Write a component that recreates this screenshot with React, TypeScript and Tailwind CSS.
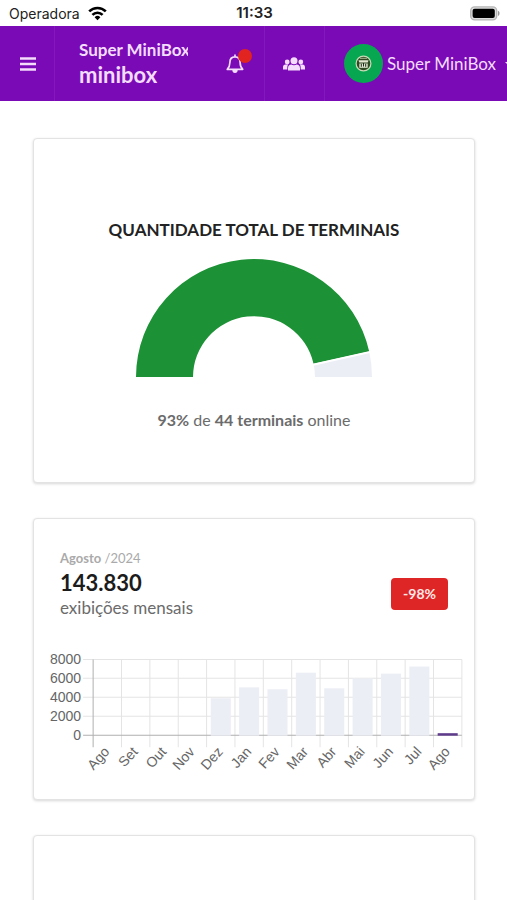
import type { ReactNode } from "react";

const months = [
  { label: "Ago", value: 0 },
  { label: "Set", value: 0 },
  { label: "Out", value: 0 },
  { label: "Nov", value: 0 },
  { label: "Dez", value: 3900 },
  { label: "Jan", value: 5050 },
  { label: "Fev", value: 4850 },
  { label: "Mar", value: 6600 },
  { label: "Abr", value: 4950 },
  { label: "Mai", value: 6000 },
  { label: "Jun", value: 6500 },
  { label: "Jul", value: 7250 },
  { label: "Ago", value: 144 },
];

const StatusBar = () => (
  <div className="grid h-[26px] shrink-0 grid-cols-3 items-center bg-white pl-[9px] pr-[7px] font-['Inter',sans-serif] text-[14px] text-[#222]">
    <div className="flex items-center gap-[8px]">
      <span>Operadora</span>
      <svg width="19" height="15" viewBox="0 0 19 15" aria-hidden="true">
        <g fill="none" stroke="#000" strokeWidth="2.6">
          <path d="M1.2 5.4a11.8 11.8 0 0 1 16.6 0" />
          <path d="M4.4 8.8a7.2 7.2 0 0 1 10.2 0" />
        </g>
        <path d="M9.5 14.2 6.6 11.2a4.1 4.1 0 0 1 5.8 0z" fill="#000" />
      </svg>
    </div>
    <span className="text-center text-[15px] font-semibold">11:33</span>
    <svg
      className="justify-self-end"
      width="30"
      height="15"
      viewBox="0 0 30 15"
      aria-hidden="true"
    >
      <rect x="0.7" y="0.9" width="26" height="13" rx="4" fill="#ddd" stroke="#b5b5b5" strokeWidth="1.4" />
      <rect x="2.6" y="2.8" width="22.2" height="9.2" rx="2" fill="#000" />
      <path d="M28 4.8c2 .8 2 4.4 0 5.2z" fill="#999" />
    </svg>
  </div>
);

const Header = () => (
  <header className="flex h-[75px] shrink-0 items-stretch overflow-hidden bg-[#7a0ab5] text-[#f3dcfc]">
    <button
      type="button"
      aria-label="Menu"
      className="flex w-[55px] shrink-0 items-center justify-center border-r border-[#8418bb] pl-[2px]"
    >
      <svg width="16" height="14" viewBox="0 0 16 14" aria-hidden="true">
        <path d="M0 1.5h16M0 7h16M0 12.5h16" stroke="currentColor" strokeWidth="2.4" />
      </svg>
    </button>

    <div className="flex min-w-0 flex-1 flex-col justify-center pb-[2px] pl-6">
      <span className="w-[109px] overflow-hidden whitespace-nowrap text-[17px] leading-[24px] font-bold">
        Super MiniBox
      </span>
      <strong className="text-[22px] leading-[26px] font-bold">minibox</strong>
    </div>

    <button
      type="button"
      aria-label="Notificações"
      className="relative flex w-[60px] shrink-0 items-center justify-center border-r border-[#8418bb]"
    >
      <svg width="18" height="20" viewBox="0 0 16 18" aria-hidden="true">
        <path
          d="M8 1v1.6M8 2.6c-3 0-4.6 2.2-4.6 5 0 3.2-.8 4.6-2.4 6.2h14c-1.6-1.6-2.4-3-2.4-6.2 0-2.8-1.6-5-4.6-5z"
          fill="none"
          stroke="currentColor"
          strokeWidth="1.5"
          strokeLinejoin="round"
          strokeLinecap="round"
        />
        <path d="M5.6 14.5a2.4 2.7 0 0 0 4.8 0z" fill="currentColor" />
      </svg>
      <span className="absolute top-[23px] left-[33px] size-[14px] rounded-full bg-[#e1241f]" />
    </button>

    <button
      type="button"
      aria-label="Usuários"
      className="flex w-[60px] shrink-0 items-center justify-center border-r border-[#8418bb] pr-[2px]"
    >
      <svg width="22" height="14" viewBox="0 0 22 14" fill="currentColor" aria-hidden="true">
        <circle cx="4.2" cy="5" r="2.4" />
        <circle cx="17.8" cy="5" r="2.4" />
        <path d="M0 12.5V10.2c0-1.7 1-2.6 2.4-2.6h2.9C4.4 8.4 4.3 9.6 4.3 12.5z" />
        <path d="M22 12.5V10.2c0-1.7-1-2.6-2.4-2.6h-2.9c.9.8 1 2 1 4.9z" />
        <circle cx="11" cy="3.8" r="3.5" />
        <path d="M5 13.5v-2.3c0-2.2 1.4-3.6 3.4-3.6.7.4 1.6.7 2.6.7s1.9-.3 2.6-.7c2 0 3.4 1.4 3.4 3.6v2.3z" />
      </svg>
    </button>

    <button
      type="button"
      className="flex w-[182px] shrink-0 items-center gap-1 pl-[19px] text-[17px] whitespace-nowrap"
    >
      <svg className="shrink-0" width="39" height="39" viewBox="0 0 39 39" aria-hidden="true">
        <circle cx="19.5" cy="19.5" r="19.5" fill="#06a750" />
        <circle cx="19.5" cy="19.5" r="7.4" fill="#2f4a22" stroke="#c9dcb8" strokeWidth="1.2" />
        <path d="M14.5 16.2h10l-.8 2.2h-8.4z" fill="#e4e6d2" />
        <path d="M15.3 19.5h8.4v4.3h-8.4z" fill="#dfe6d0" />
        <path d="M17.3 19.8v3M19.5 19v3.5M21.7 19.8v3" stroke="#1f2a18" strokeWidth="1" />
        <path d="M16 14.3h7" stroke="#a9b894" strokeWidth="1" />
      </svg>
      <span>Super MiniBox</span>
      <svg className="ml-[5px] shrink-0" width="8" height="4" viewBox="0 0 8 4" aria-hidden="true">
        <path d="M0 0h8L4 4z" fill="currentColor" />
      </svg>
    </button>
  </header>
);

const Card = ({ className, children }: { className: string; children?: ReactNode }) => (
  <section
    className={`shrink-0 rounded-[4px] border border-[#e3e3e3] bg-white shadow-[0_1px_3px_rgba(0,0,0,0.16)] ${className}`}
  >
    {children}
  </section>
);

const OnlineGauge = () => (
  <svg
    className="mt-[16px] w-[238px]"
    viewBox="0 0 238 119"
    role="img"
    aria-label="93% dos terminais online"
  >
    <path d="M234.2 92.5A118 118 0 0 1 237 118H180A61 61 0 0 0 178.5 104.7Z" fill="#ebeef5" />
    <path d="M1 118A118 118 0 0 1 234.2 92.5L178.5 104.7A61 61 0 0 0 58 118Z" fill="#1c9135" />
    <path d="M178 105.8 235 93.1" stroke="#fff" strokeWidth="2" />
  </svg>
);

const LEFT = 47;
const BASE = 83;
const STEP = 28.3;
const SCALE = 75.6 / 8000;

const ViewsChart = () => (
  <svg
    className="mt-[33px] w-full font-['Liberation_Sans',Arial,sans-serif]"
    viewBox="0 0 417 129"
    role="img"
    aria-label="Exibições por mês"
  >
    <g stroke="#e4e4e4">
      {[2000, 4000, 6000, 8000].map((tick) => (
        <path key={tick} d={`M${LEFT - 10} ${BASE - tick * SCALE}H${LEFT + 13 * STEP}`} />
      ))}
      {Array.from({ length: 13 }, (_, i) => (
        <path key={i} d={`M${LEFT + (i + 1) * STEP} ${BASE - 8000 * SCALE}V${BASE + 12}`} />
      ))}
    </g>
    <path
      d={`M${LEFT} ${BASE - 8000 * SCALE}V${BASE + 12}M${LEFT - 10} ${BASE}H${LEFT + 13 * STEP}`}
      stroke="#b0b0b0"
    />
    <g fill="#666" fontSize="14" textAnchor="end">
      {[0, 2000, 4000, 6000, 8000].map((tick) => (
        <text key={tick} x={LEFT - 12} y={BASE - tick * SCALE + 5}>
          {tick}
        </text>
      ))}
    </g>
    {months.map((month, i) => {
      const center = LEFT + (i + 0.5) * STEP;
      const last = i === months.length - 1;
      const height = last ? 2 : month.value * SCALE;
      return (
        <g key={i}>
          {month.value > 0 && (
            <rect
              x={center - 10}
              y={BASE - height}
              width="20"
              height={height + 0.5}
              fill={last ? "#5f3b8c" : "#ebeef5"}
            />
          )}
          <text
            transform={`translate(${center + 3} ${BASE + 17}) rotate(-48)`}
            fontSize="14"
            fill="#666"
            textAnchor="end"
          >
            {month.label}
          </text>
        </g>
      );
    })}
  </svg>
);

const App = () => {
  return (
    <div className="flex h-screen flex-col overflow-hidden bg-white font-['Lato',sans-serif]">
      <StatusBar />
      <Header />

      <main className="flex min-h-0 flex-1 flex-col gap-[35px] overflow-hidden pr-[32px] pl-[33px] pt-[37px]">
        <Card className="flex flex-col items-center px-4 pt-[78px] pb-[50px]">
          <h2 className="text-[17px] leading-[26px] font-bold text-[#222]">
            QUANTIDADE TOTAL DE TERMINAIS
          </h2>
          <OnlineGauge />
          <p className="mt-[30px] text-[16px] leading-[24px] text-[#6b6b6b]">
            <strong>93%</strong> de <strong>44 terminais</strong> online
          </p>
        </Card>

        <Card className="pt-[28px] pr-[10px] pb-[18px] pl-[12px]">
          <div className="flex items-end justify-between pr-[16px] pl-[14px]">
            <div>
              <p className="text-[13px] leading-[22px] text-[#aaa]">
                <strong>Agosto</strong> /2024
              </p>
              <p className="text-[22px] leading-[28px] font-bold text-[#1c1c1c]">143.830</p>
              <p className="text-[17px] leading-[22px] text-[#6b6b6b]">exibições mensais</p>
            </div>
            <span className="mb-[9px] rounded-[4px] bg-[#df2626] px-3 py-1 text-[14px] leading-[24px] font-bold text-[#ffe9e9]">
              -98%
            </span>
          </div>
          <ViewsChart />
        </Card>

        <Card className="h-[280px]" />
      </main>
    </div>
  );
};

export default App;
